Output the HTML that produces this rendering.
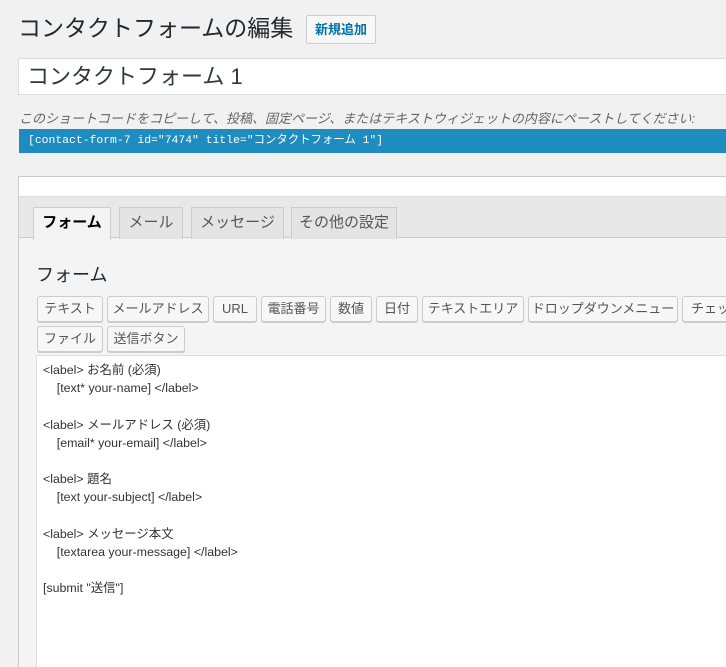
<!DOCTYPE html>
<html><head><meta charset="utf-8"><style>
*{box-sizing:border-box;margin:0;padding:0}
html,body{width:726px;height:667px;overflow:hidden}
body{background:#f1f1f1;font-family:"Liberation Sans","Noto Sans CJK JP",sans-serif;color:#23282d;position:relative}
.a{position:absolute}
h1{position:absolute;left:18px;top:12px;font-size:23px;font-weight:400;line-height:32px}
.nb{left:306px;top:15px;width:70px;height:29px;border:1px solid #ccc;background:#f7f7f7;color:#0073aa;font-size:13px;font-weight:bold;text-align:center;line-height:27px;border-radius:2px}
.ti{left:18px;top:58px;width:720px;height:37px;background:#fff;border:1px solid #ddd;font-size:22px;padding-left:8px;line-height:35px;color:#32373c}
.desc{left:19px;top:108px;font-size:13px;font-style:italic;color:#666;white-space:nowrap}
.bar{left:19px;top:129px;width:720px;height:24px;background:#1e8cbe;color:#fff;font-family:"Liberation Mono","Noto Sans CJK JP",monospace;font-size:11.4px;line-height:24px;padding-left:9px}
.panel{left:18px;top:176px;width:720px;height:500px;border:1px solid #ccc;background:#f4f4f4}
.wt{left:0;top:0;width:720px;height:20px;background:#fff;border-bottom:1px solid #ddd}
.tb{left:0;top:20px;width:720px;height:41px;background:#e8e8e8;border-bottom:1px solid #ccc}
.tab{position:absolute;top:10px;height:32px;border:1px solid #ccc;border-bottom:none;background:#e4e4e4;font-size:15px;text-align:center;line-height:30px;color:#555}
.tab.on{background:#f4f4f4;height:33px;color:#000;font-weight:bold}
.hd{left:17px;top:86px;font-size:18px;line-height:24px}
.b{position:absolute;height:26px;border:1px solid #ccc;background:#f7f7f7;font-size:13px;line-height:24px;text-align:center;color:#555;border-radius:3px;white-space:nowrap;overflow:hidden;box-shadow:0 1px 0 #ccc}
.ta{left:17px;top:178px;width:710px;height:330px;background:#fff;border:1px solid #ddd;font-size:12.4px;line-height:18.2px;padding:5px 6px;color:#333;white-space:pre}
</style></head><body>
<h1>コンタクトフォームの編集</h1>
<div class="a nb">新規追加</div>
<div class="a ti">コンタクトフォーム 1</div>
<div class="a desc">このショートコードをコピーして、投稿、固定ページ、またはテキストウィジェットの内容にペーストしてください:</div>
<div class="a bar">[contact-form-7 id="7474" title="コンタクトフォーム 1"]</div>
<div class="a panel">
<div class="a wt"></div>
<div class="a tb">
<div class="tab on" style="left:14px;width:78px">フォーム</div>
<div class="tab" style="left:100px;width:64px">メール</div>
<div class="tab" style="left:172px;width:93px">メッセージ</div>
<div class="tab" style="left:272px;width:106px">その他の設定</div>
</div>
<div class="a hd">フォーム</div>
<div class="b" style="left:18px;top:119px;width:66px">テキスト</div>
<div class="b" style="left:88px;top:119px;width:102px">メールアドレス</div>
<div class="b" style="left:194px;top:119px;width:44px">URL</div>
<div class="b" style="left:242px;top:119px;width:65px">電話番号</div>
<div class="b" style="left:311px;top:119px;width:42px">数値</div>
<div class="b" style="left:357px;top:119px;width:42px">日付</div>
<div class="b" style="left:403px;top:119px;width:102px">テキストエリア</div>
<div class="b" style="left:509px;top:119px;width:150px">ドロップダウンメニュー</div>
<div class="b" style="left:663px;top:119px;width:80px;text-align:left;padding-left:8px">チェックボックス</div>
<div class="b" style="left:18px;top:149px;width:66px">ファイル</div>
<div class="b" style="left:88px;top:149px;width:78px">送信ボタン</div>
<div class="a ta">&lt;label&gt; お名前 (必須)
    [text* your-name] &lt;/label&gt;

&lt;label&gt; メールアドレス (必須)
    [email* your-email] &lt;/label&gt;

&lt;label&gt; 題名
    [text your-subject] &lt;/label&gt;

&lt;label&gt; メッセージ本文
    [textarea your-message] &lt;/label&gt;

[submit "送信"]</div>
</div>
</body></html>
